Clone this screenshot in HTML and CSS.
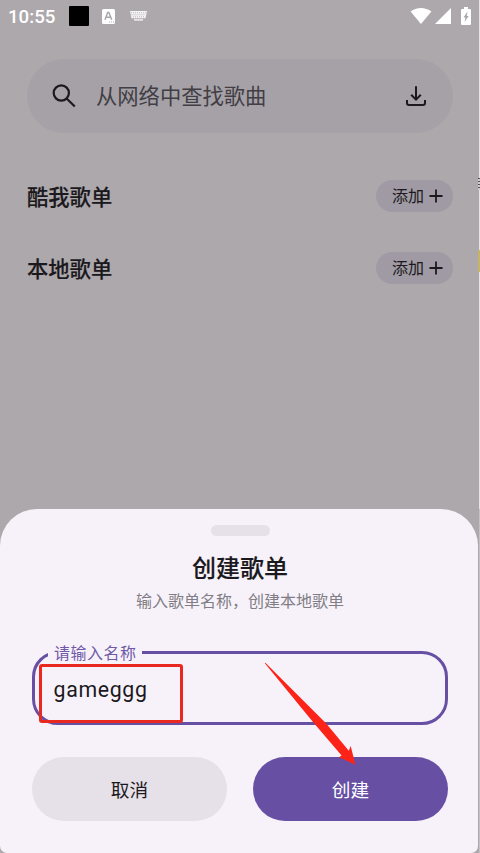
FILE: index.html
```html
<!DOCTYPE html>
<html lang="zh-CN">
<head>
<meta charset="utf-8">
<title>创建歌单</title>
<link rel="stylesheet" href="styles.css">
</head>
<body>
<div class="window">
<main class="phone">
  <header class="status">
    <span class="clock">10:55</span>
    <span class="black-box"></span>
    <svg class="input-icon" width="13" height="15" viewBox="0 0 13 15"><rect width="13" height="15" rx="1.5" fill="#fff"/><path d="M3 10.7 5.7 3.5h1.2l2.8 7.2M4.2 8.2h4.3" fill="none" stroke="#aba6aa" stroke-width="1.5"/><path d="M7 13h1m1 0h1m1 0h1" stroke="#aba6aa"/></svg>
    <svg class="keyboard-icon" width="17" height="10" viewBox="0 0 17 10"><path d="M0 0h17l-1.500 7.300H1.500Z" fill="#f5f3f5"/><path d="M1 1.800h15M1.500 3.800h14M3 5.800h11" stroke="#aba6aa" stroke-width=".8" stroke-dasharray="1 1"/><path d="M4 8.900h9" stroke="#f5f3f5" stroke-width="1.400"/></svg>
    <span class="spacer"></span>
    <svg class="wifi" width="22" height="16" viewBox="0 0 22 16"><path d="M11 16 .6 3.600C6.500-1.100 15.500-1.100 21.400 3.600Z" fill="#fff"/></svg>
    <svg class="signal" width="16" height="16" viewBox="0 0 16 16"><path d="M0 16 16 0v16Z" fill="#fff"/></svg>
    <svg class="battery" width="10" height="18" viewBox="0 0 10 18"><path d="M3 0h4v2h2a1 1 0 0 1 1 1v14a1 1 0 0 1-1 1H1a1 1 0 0 1-1-1V3a1 1 0 0 1 1-1h2Z" fill="#fff"/><path d="M6.500 4.500 2.500 10.500h2L3.500 15l4.200-6H5.800Z" fill="#aba6aa"/></svg>
  </header>
  <div class="search">
    <svg width="24" height="24" viewBox="0 0 24 24" fill="none" stroke="#1b191d" stroke-width="2.200"><circle cx="9.300" cy="9" r="7.600"/><path d="m14.600 14.500 8.200 8"/></svg>
    <span class="search-text">从网络中查找歌曲</span>
    <svg width="20" height="20" viewBox="0 0 20 20" fill="none" stroke="#1b191d" stroke-width="2"><path d="M10 .2v13.300M5.200 8.800 10 13.600l4.800-4.800M1 14V17q0 2 2 2h14q2 0 2-2v-3"/></svg>
  </div>
  <section class="lists">
    <div class="list-row"><h2>酷我歌单</h2><div class="add"><span>添加</span><svg width="14" height="14" viewBox="0 0 14 14"><path d="M7 .5v13M.5 7h13" stroke="#1b191d" stroke-width="1.800"/></svg></div></div>
    <div class="list-row"><h2>本地歌单</h2><div class="add"><span>添加</span><svg width="14" height="14" viewBox="0 0 14 14"><path d="M7 .5v13M.5 7h13" stroke="#1b191d" stroke-width="1.800"/></svg></div></div>
  </section>
  <section class="sheet">
    <div class="handle"></div>
    <h1>创建歌单</h1>
    <p>输入歌单名称，创建本地歌单</p>
    <div class="field"><span class="label">请输入名称</span><span class="value">gameggg</span></div>
    <div class="actions"><div class="button cancel">取消</div><div class="button create">创建</div></div>
  </section>
</main>
<aside class="edge"><i class="tick"></i><i class="yellow"></i><i class="lower"></i></aside>
</div>
<div class="highlight"></div>
<svg class="arrow" width="94" height="106" viewBox="0 0 94 106"><path d="M1.400 .8 62 61.300 84.800 88.800 86.700 84 91.400 102.700 75 95.300 77.600 93.500 50 61.300 .8 1.300Z" fill="#fc2318"/></svg>
</body>
</html>
```
FILE: styles.css
```css
* { box-sizing: border-box; }
body { margin: 0; font-family: Roboto, "Noto Sans CJK SC", sans-serif; color: #1b191d; }
svg { display: block; flex: none; }
.window { display: flex; width: 480px; height: 853px; background: #c9c8c9; overflow: hidden; }
.phone { display: flex; flex-direction: column; width: 479px; height: 853px; background: #ada8ac; overflow: hidden; }
.status { display: flex; align-items: center; height: 32px; padding: 0 8px; flex: none; }
.clock { width: 61px; font-size: 18.700px; font-weight: 500; color: #fff; padding-top: 1px; }
.black-box { width: 20px; height: 20px; border-radius: 1px; background: #000; }
.input-icon { margin-left: 13px; }
.keyboard-icon { margin-left: 15px; }
.spacer { flex: 1; }
.wifi { margin-right: 3px; }
.signal { margin-right: 10px; }
.search { display: flex; align-items: center; height: 74px; margin: 27px 26px 0 27px; padding: 0 27px 0 25px; border-radius: 37px; background: #a5a1a7; flex: none; }
.search-text { flex: 1; margin-left: 20px; padding-top: 2px; font-size: 21.300px; line-height: 32px; color: #413e44; }
.lists { display: flex; flex-direction: column; gap: 40px; margin: 47px 26px 0 27px; }
.list-row { display: flex; align-items: center; justify-content: space-between; height: 32px; }
h1, h2, p { margin: 0; }
h2 { padding-top: 4px; font-size: 21.300px; font-weight: 500; line-height: 32px; -webkit-text-stroke: .15px; }
.add { display: flex; align-items: center; gap: 5px; width: 77px; height: 32px; padding-left: 16px; border-radius: 16px; background: #9f9aa3; font-size: 16px; line-height: 24px; }
.add span { padding-top: 2px; }
.sheet { display: flex; flex-direction: column; align-items: center; height: 344px; margin-top: auto; margin-right: 1px; padding: 16px 30px 0 32px; border-radius: 37px 37px 7px 7px; background: #f7f2fa; flex: none; }
.handle { width: 59px; height: 11px; border-radius: 6px; background: #e6e0e9; }
h1 { margin-top: 15px; font-size: 24px; font-weight: 500; line-height: 36px; -webkit-text-stroke: .15px; }
p { margin-top: 3px; font-size: 16px; line-height: 24px; color: #817d84; }
.field { position: relative; display: flex; align-items: center; width: 416px; height: 74px; margin-top: 37px; padding: 2px 0 0 18.500px; border: 3px solid #6750a4; border-radius: 26px; }
.label { position: absolute; left: 13px; top: -12px; padding: 0 5px 0 6px; font-size: 16px; letter-spacing: .530px; line-height: 24px; color: #7059a7; background: #f7f2fa; }
.value { font-size: 21.300px; letter-spacing: .670px; }
.actions { display: flex; gap: 26px; margin-top: 32px; }
.button { display: flex; align-items: center; justify-content: center; width: 195px; height: 64px; padding-bottom: 2px; border-radius: 32px; font-size: 18.700px; }
.cancel { background: #e6e0e9; }
.create { background: #6750a4; color: #fff; }
.edge { position: relative; width: 1px; height: 853px; background: #e3e6e3; }
.tick { position: absolute; top: 178px; left: -1px; width: 2px; height: 12px; background: repeating-linear-gradient(#555 0 1px, #ccc 1px 3px); }
.yellow { position: absolute; top: 250px; left: -1px; width: 2px; height: 22px; background: #c8b36a; }
.lower { position: absolute; top: 509px; left: 0; width: 1px; height: 344px; background: #c4c3c4; }
.highlight { position: absolute; left: 39px; top: 664px; width: 144px; height: 59px; border: 3px solid #e9281f; border-radius: 3px; }
.arrow { position: absolute; left: 264px; top: 662px; }
```
